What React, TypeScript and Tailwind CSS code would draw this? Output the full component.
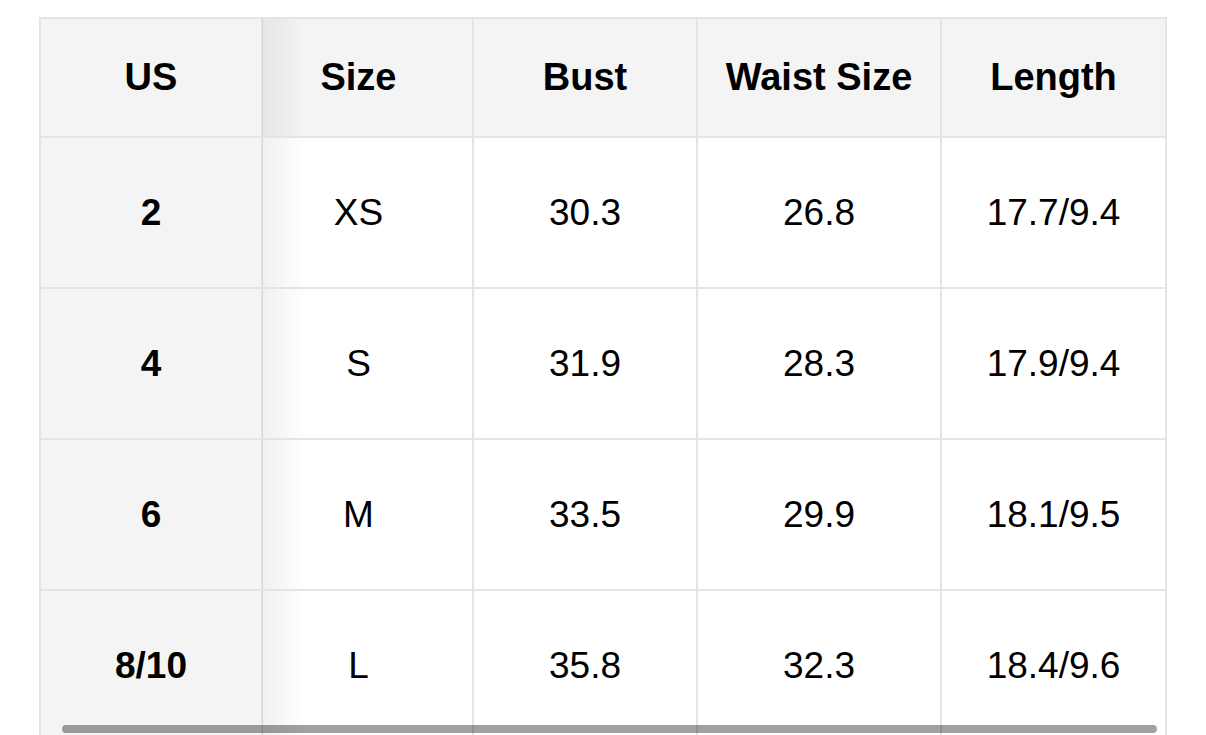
const headers = ["US", "Size", "Bust", "Waist Size", "Length"];

const rows = [
  ["2", "XS", "30.3", "26.8", "17.7/9.4"],
  ["4", "S", "31.9", "28.3", "17.9/9.4"],
  ["6", "M", "33.5", "29.9", "18.1/9.5"],
  ["8/10", "L", "35.8", "32.3", "18.4/9.6"],
];

const colWidths = ["w-[222px]", "w-[211px]", "w-[224px]", "w-[244px]", "w-[225px]"];

// sticky first column casts a soft shadow onto the next one
const stickyCell =
  "relative bg-[#f4f4f4] after:content-[''] after:absolute after:top-0 after:bottom-0 after:left-full after:ml-[1px] after:w-[44px] after:bg-gradient-to-r after:from-black/[0.06] after:to-transparent after:pointer-events-none";

// the Size column is partly scrolled under the sticky column
const cellPad = (i: number) => (i === 1 ? "pr-[18px]" : "");

export default function App() {
  return (
    <div
      className="relative h-[735px] w-[1206px] overflow-hidden bg-white pl-[39px] pt-[17px] text-black"
      style={{ fontFamily: '"Liberation Sans", Arial, Helvetica, sans-serif' }}
    >
      <div className="w-[1128px]">
        <table className="table-fixed border-collapse text-center">
          <colgroup>
            {colWidths.map((w, i) => (
              <col key={i} className={w} />
            ))}
          </colgroup>
          <thead>
            <tr className="h-[119px]">
              {headers.map((h, i) => (
                <th
                  key={h}
                  className={`border-2 border-[#e4e4e4] bg-[#f4f4f4] align-middle text-[38px] font-bold ${cellPad(i)} ${
                    i === 0 ? stickyCell : ""
                  }`}
                >
                  {h}
                </th>
              ))}
            </tr>
          </thead>
          <tbody>
            {rows.map((r, ri) => (
              <tr key={ri} className="h-[151px]">
                {r.map((c, ci) => (
                  <td
                    key={ci}
                    className={`border-2 border-[#e4e4e4] align-middle text-[37px] ${cellPad(ci)} ${
                      ci === 0 ? `${stickyCell} font-bold` : "bg-white font-normal"
                    }`}
                  >
                    {c}
                  </td>
                ))}
              </tr>
            ))}
          </tbody>
        </table>
      </div>

      {/* horizontal scroll thumb */}
      <div className="absolute left-[62px] top-[725px] h-[8px] w-[1095px] rounded-full bg-black/[0.37]" />
    </div>
  );
}
